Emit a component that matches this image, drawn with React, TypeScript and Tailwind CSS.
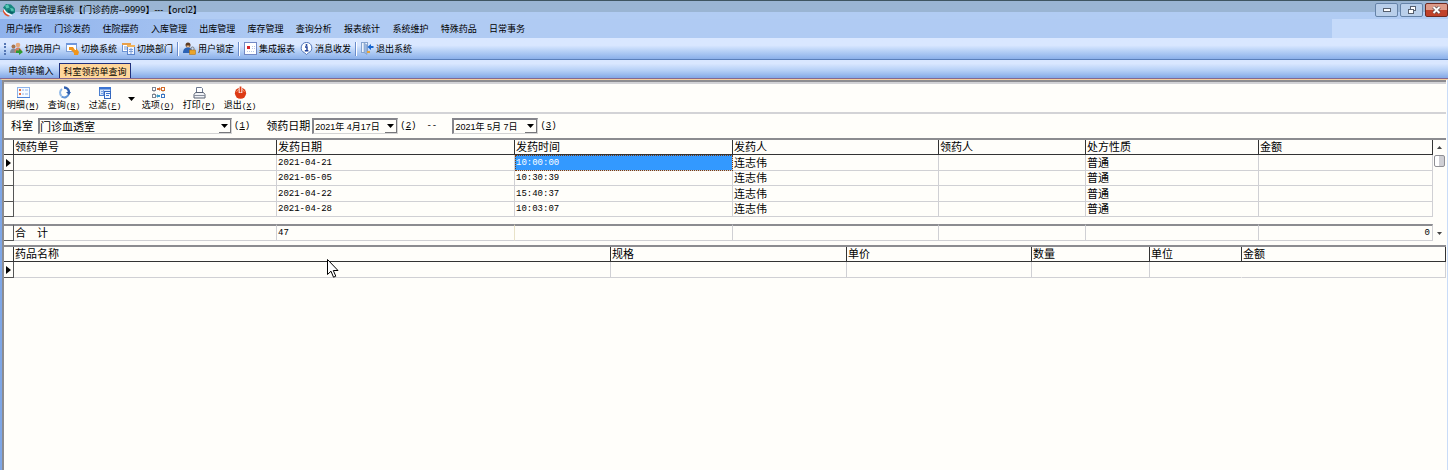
import React from 'react';

const MENUS = ['用户操作', '门诊发药', '住院摆药', '入库管理', '出库管理', '库存管理', '查询分析', '报表统计', '系统维护', '特殊药品', '日常事务'];

const RECORDS = [
  { date: '2021-04-21', time: '10:00:00', sender: '连志伟', kind: '普通' },
  { date: '2021-05-05', time: '10:30:39', sender: '连志伟', kind: '普通' },
  { date: '2021-04-22', time: '15:40:37', sender: '连志伟', kind: '普通' },
  { date: '2021-04-28', time: '10:03:07', sender: '连志伟', kind: '普通' },
];

const RECORD_HEADS = ['领药单号', '发药日期', '发药时间', '发药人', '领药人', '处方性质', '金额'];
const DRUG_HEADS = ['药品名称', '规格', '单价', '数量', '单位', '金额'];

/* Icons */

const Logo = () => (
  <svg viewBox="0 0 14 14" className="w-3.5 h-3.5">
    <path d="M1 4.500 4 1l5 0.500 4 4 0 4-3 2-5-2z" fill="#17877f" />
    <path d="M3 2.500l3-1 1.500 3-3 1zM8 5l3 0.500 1 2-2.500 0.500z" fill="#58c9b6" />
    <path d="M6 7l4 2 2 0-2 2-4-2z" fill="#0b5e66" />
    <path d="M1 6.500l3 4 4 2.500-2 0.500-3-1.500-2-3z" fill="#e0512c" />
    <path d="M2 6l3 3.500 5 2.500 0 1-5-2-3-3z" fill="#fff" />
  </svg>
);

const SwitchUserIcon = () => (
  <svg viewBox="0 0 13 13" className="w-[13px] h-[13px]">
    <circle cx="3.500" cy="4.500" r="2" fill="#a9744c" />
    <path d="M0 11c0-3 1.500-4.500 3.500-4.500S7 8 7 11z" fill="#848b9b" />
    <circle cx="8" cy="3" r="2.300" fill="#e5a97c" />
    <path d="M4.500 10.500c0-3 1.500-5 3.500-5s4 2 4 5z" fill="#d37f63" />
    <path d="M6 8.500h3V6.500l4 3.500-4 3v-2H6z" fill="#2f9b33" />
  </svg>
);

const SwitchSystemIcon = () => (
  <svg viewBox="0 0 13 13" className="w-[13px] h-[13px]">
    <rect x="0.500" y="1.500" width="10" height="8" fill="#fff" stroke="#7d9fd6" />
    <path d="M0 1h11v2H0z" fill="#6f97dc" />
    <path d="M3 5h4l2 3h1V6l3 4-1 3H8v-2L5 8H3z" fill="#f0961e" />
  </svg>
);

const SwitchDeptIcon = () => (
  <svg viewBox="0 0 13 13" className="w-[13px] h-[13px]">
    <rect x="0.500" y="1.500" width="8" height="8" fill="#fff" stroke="#6d94d4" />
    <path d="M0 1h9v2H0z" fill="#e8a04a" />
    <path d="M2 5h3M2 7h3" stroke="#6d94d4" />
    <rect x="5.500" y="3.500" width="7" height="9" fill="#eef4ff" stroke="#5a84cc" />
    <path d="M5 3h8v2H5z" fill="#f2b45c" />
    <path d="M7 7.500h4M7 9.500h4M9 6v6" stroke="#7fa0d8" />
  </svg>
);

const LockIcon = () => (
  <svg viewBox="0 0 13 13" className="w-[13px] h-[13px]">
    <circle cx="5" cy="3" r="2.500" fill="#5b3a22" />
    <path d="M3.500 3.500h3v2h-3z" fill="#e9b98d" />
    <path d="M0 11c0-4 2-5.500 5-5.500s4 1.500 4 5.500z" fill="#2b62b5" />
    <path d="M8 8V6.500a1.500 1.500 0 013 0V8" fill="none" stroke="#777" />
    <rect x="6.500" y="8" width="6" height="4.500" fill="#eaa42b" stroke="#a86b10" strokeWidth="0.500" />
  </svg>
);

const ReportIcon = () => (
  <svg viewBox="0 0 13 13" className="w-[13px] h-[13px]">
    <rect x="0.500" y="0.500" width="12" height="12" fill="#fff" stroke="#7388c4" />
    <rect x="3" y="4" width="3" height="3" fill="#d8232a" />
    <path d="M8 4.500h3M8 6.500h3M3 9.500h8" stroke="#b9c6e6" strokeDasharray="1 1" />
  </svg>
);

const MessageIcon = () => (
  <svg viewBox="0 0 13 13" className="w-[13px] h-[13px]">
    <path d="M6.500 0.500a5.300 5.300 0 012 10.200l-2 2-2-2a5.300 5.300 0 012-10.200z" fill="#fff" stroke="#4f74b8" />
    <path d="M5 5h2v3.500M4.800 8.800h3.600" stroke="#1d3f98" strokeWidth="1.400" fill="none" />
    <circle cx="6.500" cy="2.900" r="1" fill="#1d3f98" />
  </svg>
);

const LeaveIcon = () => (
  <svg viewBox="0 0 13 13" className="w-[13px] h-[13px]">
    <rect x="0.500" y="0.500" width="6" height="10" fill="#eef4fc" stroke="#86a4cf" />
    <path d="M3 1l3 2v9.500l-3-2z" fill="#9bb8e0" stroke="#6f8fbf" strokeWidth="0.500" />
    <path d="M6 9h3v2H6z" fill="#e5a33c" />
    <path d="M12.500 4H10V2L6.500 5 10 8V6h2.500z" fill="#1766cf" />
  </svg>
);

const DetailIcon = () => (
  <svg viewBox="0 0 13 13" className="w-[13px] h-[13px]">
    <rect x="0.500" y="1.500" width="12" height="10" fill="#f7fbff" stroke="#8db2e8" />
    <path d="M0 11.500h13" stroke="#4a80d8" />
    <path d="M2 4h2M2 8h2" stroke="#e8683f" strokeWidth="2" />
    <path d="M5 4h2m1 0h3M5 8h2m1 0h3" stroke="#8fb2ea" />
  </svg>
);

const QueryIcon = () => (
  <svg viewBox="0 0 13 13" className="w-[13px] h-[13px]">
    <path d="M4 3a4.500 4.500 0 00-0.500 7" fill="none" stroke="#8fb8e8" strokeWidth="2" />
    <path d="M3.500 10.500c3 2 7 0.500 7.500-3.500" fill="none" stroke="#5f93d6" strokeWidth="2" />
    <path d="M6 1.500a5 5 0 015 5" fill="none" stroke="#2f5fae" strokeWidth="2.400" />
    <path d="M8 6h5l-2 3z" fill="#2f5fae" />
  </svg>
);

const FilterIcon = () => (
  <svg viewBox="0 0 13 13" className="w-[13px] h-[13px]">
    <rect x="0.500" y="1.500" width="11" height="8" fill="#d7e6fb" stroke="#4a7fd0" />
    <path d="M0 1h12v2.500H0z" fill="#3b74d2" />
    <path d="M2 5.500h8M2 7.500h8M4.500 4v5" stroke="#79a2e4" />
    <rect x="5.500" y="5.500" width="6" height="7" fill="#f3f8ff" stroke="#3567bd" />
    <path d="M7 7.500h4M7 9.500h3" stroke="#3b74d2" />
  </svg>
);

const OptionIcon = () => (
  <svg viewBox="0 0 13 13" className="w-[13px] h-[13px]">
    <g fill="#fff" strokeWidth="1">
      <rect x="0.500" y="1.500" width="3" height="3" stroke="#7d8592" />
      <rect x="9.500" y="1.500" width="3" height="3" stroke="#d06a28" />
      <rect x="0.500" y="8.500" width="3" height="3" stroke="#7d8592" />
      <rect x="9.500" y="8.500" width="3" height="3" stroke="#3b76c4" />
    </g>
    <path d="M5 2h2V1l2 2-2 2V4H5z" fill="#d9682a" />
    <path d="M8 9H6V8l-2 2 2 2v-1h2z" fill="#3b9ac8" />
    <path d="M2 5v3M11 5v3" stroke="#9a9a9a" strokeDasharray="1 1" />
  </svg>
);

const PrintIcon = () => (
  <svg viewBox="0 0 13 13" className="w-[13px] h-[13px]">
    <path d="M3.500 7V1.500h5l1 1V7" fill="#fff" stroke="#6b7890" />
    <path d="M2.500 6.500h8l1.500 2v3.500H1V8.500z" fill="#f1f3f7" stroke="#5b6373" />
    <path d="M1 9.500h11" stroke="#8a919e" />
  </svg>
);

const PowerIcon = () => (
  <svg viewBox="0 0 13 13" className="w-[13px] h-[13px]">
    <circle cx="6.500" cy="7.200" r="5.600" fill="#dd3a14" />
    <path d="M2.500 6a4.500 4.500 0 014-3 4.500 4.500 0 014 3" fill="none" stroke="#f08a5e" />
    <path d="M6.500 0v7" stroke="#fff" strokeWidth="3.600" />
    <path d="M6.500 0.500v6" stroke="#dd3a14" strokeWidth="1.800" />
  </svg>
);

const DownArrow = () => (
  <svg viewBox="0 0 7 4" className="w-[7px] h-1">
    <path d="M0 0h7L3.500 4z" fill="#000" />
  </svg>
);

const RowPointer = () => (
  <svg viewBox="0 0 5 8" className="w-[5px] h-2 ml-0.5">
    <path d="M0 0v8l5-4z" fill="#000" />
  </svg>
);

/* Shared pieces */

const ToolButton: React.FC<{ icon: React.ReactNode; label: string }> = ({ icon, label }) => (
  <button className="flex items-center gap-0.5 whitespace-nowrap">
    {icon}
    <span>{label}</span>
  </button>
);

const ActionButton: React.FC<{ icon: React.ReactNode; label: string; hotkey: string }> = ({ icon, label, hotkey }) => (
  <button className="flex w-8 flex-col items-center whitespace-nowrap text-[9px] leading-3">
    {icon}
    <span>
      {label}
      <span className="font-['Liberation_Mono'] text-[8px]">
        (<u>{hotkey}</u>)
      </span>
    </span>
  </button>
);

const Divider = () => <span className="-mx-px h-3.5 w-px bg-[#6a8ccb] border-r border-white box-content" />;

const Hotkey: React.FC<{ n: number }> = ({ n }) => (
  <span className="ml-0.5 font-['Liberation_Mono'] text-[9px]">
    (<u>{n}</u>)
  </span>
);

const DateBox: React.FC<{ id: string; label: string; value: string }> = ({ id, label, value }) => (
  <span className="flex h-4 w-[86px] border border-[#d4d4d4] border-t-2 border-l-2 border-t-[#85858b] border-l-[#85858b]">
    <input id={id} aria-label={label} defaultValue={value} className="min-w-0 flex-1 bg-transparent pl-px font-['Liberation_Sans','Noto_Sans_CJK_SC',sans-serif] text-[9px] outline-none" />
    <button type="button" aria-label="选择日期" className="flex w-3 items-center justify-center border-r border-b border-[#77777b]">
      <DownArrow />
    </button>
  </span>
);

const headCell = 'border-r border-b border-[#333] p-0 pl-px text-left font-normal';
const bodyCell = 'border-r border-b border-[#d0d0d4] p-0 pl-px';
const markCell = 'border-r border-b border-[#555] p-0';
const digits = "font-['Liberation_Mono'] text-[9px]";

const App: React.FC = () => {
  return (
    <div className="flex min-h-screen flex-col bg-[#fffefa] font-['Noto_Sans','Noto_Sans_CJK_SC',sans-serif] text-[9px] leading-3 text-black">
      {/* Title bar */}
      <header className="flex h-[19px] items-center border-t border-[#3f5560] bg-linear-to-b from-[#9ab5d3] from-60% to-[#b1ccf3] to-60% pl-0.5">
        <Logo />
        <h1 className="ml-1 flex-1">药房管理系统【门诊药房--9999】---【orcl2】</h1>
        <div className="flex gap-0.5 self-start pt-0.5">
          <button aria-label="最小化" className="flex h-3.5 w-[23px] items-center justify-center rounded-xs border border-[#6583a8] bg-[#b9cfea]">
            <span className="h-1 w-2 border border-[#56606f] bg-white" />
          </button>
          <button aria-label="还原" className="flex h-3.5 w-[23px] items-center justify-center rounded-xs border border-[#6583a8] bg-[#b9cfea]">
            <svg viewBox="0 0 10 9" className="h-[9px] w-2.5" fill="#fff" stroke="#56606f">
              <rect x="3.500" y="0.500" width="5" height="4" />
              <rect x="1.500" y="3.500" width="5" height="4" />
            </svg>
          </button>
          <button aria-label="关闭" className="flex h-3.5 w-[23px] items-center justify-center rounded-xs border border-[#6d2a22] bg-linear-to-b from-[#dd9a88] from-50% to-[#c1422a] to-50%">
            <svg viewBox="0 0 9 8" className="h-2 w-[9px]">
              <path d="M1.500 1l6 6M7.500 1l-6 6" stroke="#5b4848" strokeWidth="3.400" />
              <path d="M1.500 1l6 6M7.500 1l-6 6" stroke="#fff" strokeWidth="2" />
            </svg>
          </button>
        </div>
      </header>

      {/* Menu bar */}
      <nav className="flex h-[19px] items-stretch bg-linear-to-r from-[#8fb2ec] to-[#b0cbf3] to-20%">
        <div className="flex w-[525px] items-center justify-between pl-1.5">
          {MENUS.map((menu) => (
            <button key={menu}>{menu}</button>
          ))}
        </div>
        <span className="ml-auto w-[116px] bg-[#c5dafa]" />
      </nav>

      {/* Main toolbar */}
      <div className="flex h-[22px] items-center gap-[5px] border-b border-[#5a7fba] bg-linear-to-b from-[#d9e7ff] from-35% via-[#b3cef5] via-65% to-[#8bb0ea] pl-1">
        <span className="h-3 border-l-2 border-dotted border-[#5476b4] -mr-px" />
        <ToolButton icon={<SwitchUserIcon />} label="切换用户" />
        <ToolButton icon={<SwitchSystemIcon />} label="切换系统" />
        <ToolButton icon={<SwitchDeptIcon />} label="切换部门" />
        <Divider />
        <ToolButton icon={<LockIcon />} label="用户锁定" />
        <Divider />
        <ToolButton icon={<ReportIcon />} label="集成报表" />
        <ToolButton icon={<MessageIcon />} label="消息收发" />
        <Divider />
        <ToolButton icon={<LeaveIcon />} label="退出系统" />
      </div>

      {/* Page tabs */}
      <div className="flex h-[19px] items-end border-b border-[#85688f] bg-linear-to-b from-[#d9e7ff] from-20% via-[#b3cef5] via-60% to-[#83a8e6] pl-[3px]">
        <button className="h-[15px] w-14 pt-px text-center">申领单输入</button>
        <button className="h-[15px] w-[72px] border border-b-0 border-[#20307c] bg-[#ffd79b] pt-px">科室领药单查询</button>
      </div>

      <main className="flex flex-1 flex-col border-t border-l-2 border-t-[#f5cfa0] border-l-[#7ea6e6] border-r border-r-[#c9dcf8] pr-px">
        <div className="flex flex-1 flex-col border-t-2 border-l-2 border-[#8c8c90]">
          {/* Action buttons */}
          <div className="flex h-8 items-center gap-[9px] border-t-2 border-b-2 border-[#d3d3d6] pt-0.5 pl-[3px]">
            <ActionButton icon={<DetailIcon />} label="明细" hotkey="M" />
            <ActionButton icon={<QueryIcon />} label="查询" hotkey="R" />
            <ActionButton icon={<FilterIcon />} label="过滤" hotkey="F" />
            <button aria-label="过滤选项" className="-mx-0.5 w-[7px]"><DownArrow /></button>
            <ActionButton icon={<OptionIcon />} label="选项" hotkey="O" />
            <ActionButton icon={<PrintIcon />} label="打印" hotkey="P" />
            <ActionButton icon={<PowerIcon />} label="退出" hotkey="X" />
          </div>

          {/* Query conditions */}
          <form className="flex h-6 items-center pl-[7px] text-[11px]">
            <label htmlFor="dept" className="mr-[5px]">科室</label>
            <span className="flex relative h-4 w-[194px] border border-[#d4d4d4] border-t-2 border-l-2 border-t-[#85858b] border-l-[#85858b]">
              <select id="dept" className="w-full appearance-none bg-transparent outline-none leading-3">
                <option>门诊血透室</option>
              </select>
              <span className="pointer-events-none absolute inset-y-0 right-0 flex w-3 items-center justify-center border-r border-b border-[#77777b]">
                <DownArrow />
              </span>
            </span>
            <Hotkey n={1} />
            <label htmlFor="from" className="ml-4 mr-0.5">领药日期</label>
            <DateBox id="from" label="领药日期" value="2021年 4月17日" />
            <Hotkey n={2} />
            <span className={`${digits} mx-2.5 w-4`}>--</span>
            <DateBox id="to" label="截止日期" value="2021年 5月 7日" />
            <Hotkey n={3} />
          </form>

          {/* Requisition list */}
          <section className="flex border-t-2 border-[#8c8c90]">
            <div className="min-w-0 flex-1">
              <table className="w-full table-fixed border-separate border-spacing-0 text-[11px] leading-[14px]">
                <colgroup>
                  <col className="w-2.5" />
                  <col className="w-[263px]" />
                  <col className="w-[238px]" />
                  <col className="w-[218px]" />
                  <col className="w-[206px]" />
                  <col className="w-[147px]" />
                  <col className="w-[173px]" />
                  <col />
                </colgroup>
                <thead>
                  <tr>
                    <th className={headCell} />
                    {RECORD_HEADS.map((head) => (
                      <th key={head} className={headCell}>{head}</th>
                    ))}
                  </tr>
                </thead>
                <tbody>
                  {RECORDS.map((row, i) => (
                    <tr key={row.date} className="h-[15px] odd:h-4">
                      <td className={markCell}>{i === 0 && <RowPointer />}</td>
                      <td className={bodyCell} />
                      <td className={`${bodyCell} ${digits}`}>{row.date}</td>
                      <td className={`${bodyCell} ${digits} ${i === 0 ? 'bg-[#3399ff] text-white outline-1 outline-dotted -outline-offset-1 outline-[#7a3c10]' : ''}`}>{row.time}</td>
                      <td className={bodyCell}>{row.sender}</td>
                      <td className={bodyCell} />
                      <td className={bodyCell}>{row.kind}</td>
                      <td className={bodyCell} />
                    </tr>
                  ))}
                </tbody>
                <tfoot>
                  <tr className="h-[7px]">
                    <td colSpan={8} className="p-0" />
                  </tr>
                  <tr className="h-[17px]">
                    <td className={`${markCell} border-t-2 border-t-[#8c8c90]`} />
                    <td className={`${bodyCell} border-t-2 border-t-[#8c8c90]`}>合　计</td>
                    <td className={`${bodyCell} border-t-2 border-t-[#8c8c90] border-r-[#e8e2c8] ${digits}`}>47</td>
                    <td className={`${bodyCell} border-t-2 border-t-[#8c8c90]`} />
                    <td className={`${bodyCell} border-t-2 border-t-[#8c8c90]`} />
                    <td className={`${bodyCell} border-t-2 border-t-[#8c8c90]`} />
                    <td className={`${bodyCell} border-t-2 border-t-[#8c8c90]`} />
                    <td className={`${bodyCell} border-t-2 border-t-[#8c8c90] pr-0.5 text-right ${digits}`}>0</td>
                  </tr>
                </tfoot>
              </table>
            </div>
            {/* Scroll bar */}
            <div className="flex w-[13px] flex-col items-center pt-1.5 pb-1">
              <svg viewBox="0 0 5 3" className="h-[3px] w-[5px]"><path d="M0 3h5L2.500 0z" fill="#444" /></svg>
              <span className="mt-1.5 h-3 w-[11px] rounded-xs border border-[#8f8f94] bg-linear-to-r from-white from-40% to-[#cfcfd4] to-50%" />
              <svg viewBox="0 0 5 3" className="mt-auto mb-0.5 h-[3px] w-[5px]"><path d="M0 0h5L2.500 3z" fill="#444" /></svg>
            </div>
          </section>

          {/* Drug detail */}
          <section className="relative mt-1 border-t-2 border-[#8c8c90]">
            <table className="w-full table-fixed border-separate border-spacing-0 text-[11px] leading-[14px]">
              <colgroup>
                <col className="w-2.5" />
                <col className="w-[597px]" />
                <col className="w-[236px]" />
                <col className="w-[185px]" />
                <col className="w-[118px]" />
                <col className="w-[92px]" />
                <col />
              </colgroup>
              <thead>
                <tr>
                  <th className={headCell} />
                  {DRUG_HEADS.map((head) => (
                    <th key={head} className={headCell}>{head}</th>
                  ))}
                </tr>
              </thead>
              <tbody>
                <tr className="h-4">
                  <td className={markCell}><RowPointer /></td>
                  <td className={bodyCell} />
                  <td className={bodyCell} />
                  <td className={bodyCell} />
                  <td className={bodyCell} />
                  <td className={`${bodyCell} border-r-transparent`} />
                  <td className={bodyCell} />
                </tr>
              </tbody>
            </table>
            {/* Mouse pointer */}
            <svg viewBox="0 0 12 20" className="absolute left-[323px] top-3 h-5 w-3">
              <path d="M0.500 0.500v15l3.500-3.300 2.500 6 2.300-1-2.500-5.700h4.700z" fill="#fff" stroke="#000" />
            </svg>
          </section>
        </div>
      </main>
    </div>
  );
};

export default App;
